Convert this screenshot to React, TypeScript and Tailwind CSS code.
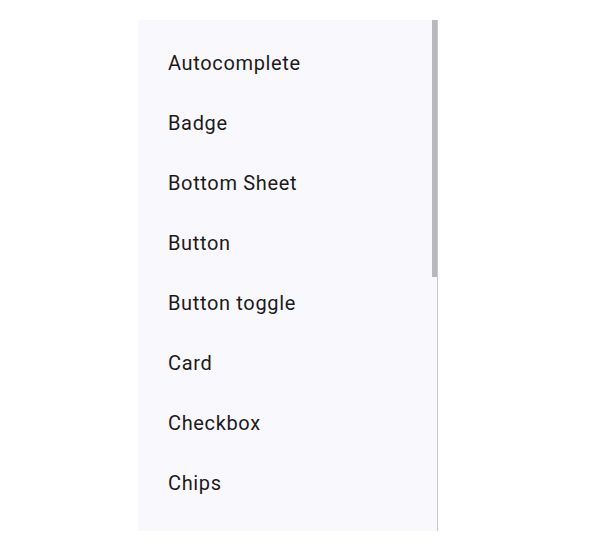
import React from 'react';

const items = [
  'Autocomplete',
  'Badge',
  'Bottom Sheet',
  'Button',
  'Button toggle',
  'Card',
  'Checkbox',
  'Chips',
];

const App: React.FC = () => {
  return (
    <div className="min-h-screen bg-white pt-[20px] pl-[138px]" style={{ fontFamily: "Roboto, 'Liberation Sans', sans-serif" }}>
      <nav className="relative w-[300px] h-[511px] bg-[#f9f8fd] border-r border-[#c8c7cd] overflow-hidden">
        <ul className="pt-[13px]">
          {items.map((item) => (
            <li key={item} className="h-[60px] flex items-center pl-[30px] text-[20px] tracking-[0.65px] text-[#1d1b20]">
              {item}
            </li>
          ))}
        </ul>
        {/* scrollbar thumb */}
        <div className="absolute top-0 right-0 w-[5px] h-[257px] bg-[#b8b7bd]" />
      </nav>
    </div>
  );
};

export default App;
